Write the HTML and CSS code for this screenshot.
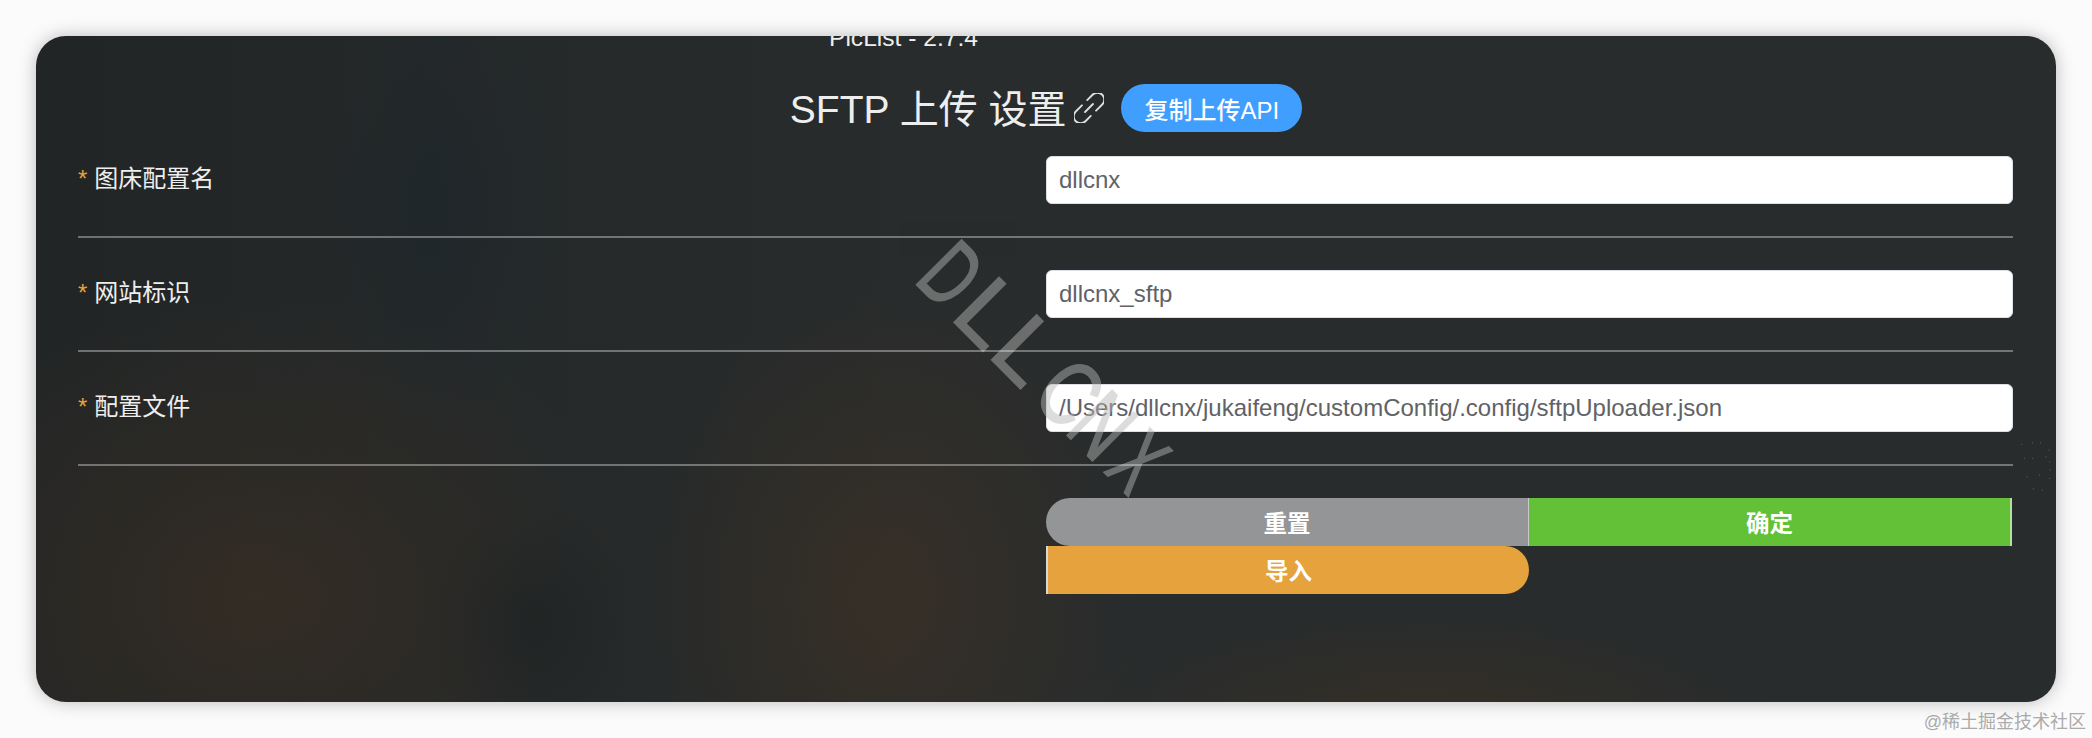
FILE: index.html
```html
<!DOCTYPE html>
<html lang="zh-CN">
<head>
  <meta charset="UTF-8">
  <meta name="viewport" content="width=device-width, initial-scale=1.0">
  <title>SFTP 上传 设置</title>
  <link rel="stylesheet" href="styles.css">
</head>
<body>
  <div class="window">
    <div class="app-title">PicList - 2.7.4</div>

    <div class="page-title">
      <span class="page-title-text">SFTP 上传 设置</span>
      <svg class="link-icon" viewBox="3 3 24 24" fill="none" stroke="#dedede" stroke-width="1.5" stroke-linecap="round">
        <g transform="rotate(-45 15 15)">
          <path d="M12.5 9.5H5.5a5.5 5.5 0 0 0 0 11H11.5"/>
          <path d="M17.5 20.5H24.5a5.5 5.5 0 0 0 0-11H18.5"/>
          <path d="M10.5 15H19.5"/>
        </g>
      </svg>
      <button class="copy-button">复制上传API</button>
    </div>

    <form class="config-form">
      <div class="form-row">
        <label class="form-label"><span class="required">*</span>图床配置名</label>
        <input class="form-input" type="text" value="dllcnx">
      </div>
      <div class="form-divider"></div>

      <div class="form-row">
        <label class="form-label"><span class="required">*</span>网站标识</label>
        <input class="form-input" type="text" value="dllcnx_sftp">
      </div>
      <div class="form-divider"></div>

      <div class="form-row">
        <label class="form-label"><span class="required">*</span>配置文件</label>
        <input class="form-input" type="text" value="/Users/dllcnx/jukaifeng/customConfig/.config/sftpUploader.json">
      </div>
      <div class="form-divider"></div>

      <div class="form-actions">
        <button type="button" class="action-button reset-button">重置</button>
        <button type="button" class="action-button confirm-button">确定</button>
        <button type="button" class="action-button import-button">导入</button>
      </div>
    </form>

    <!-- watermark lies over the form, cut off where the buttons start -->
    <div class="watermark-clip">
      <div class="watermark"><span class="wm-letter wm-d">D</span><span class="wm-letter wm-l1">L</span><span class="wm-letter wm-l2">L</span><span class="wm-letter wm-c">C</span><span class="wm-letter wm-n">N</span><span class="wm-letter wm-x">X</span></div>
    </div>

    <svg class="dots" viewBox="0 0 40 56" fill="#6d7476">
      <circle cx="1.7" cy="4.3" r=".5"/>
      <circle cx="12.7" cy="2.7" r=".5"/>
      <circle cx="20.7" cy="2.7" r=".5"/>
      <circle cx="29" cy="10" r=".5"/>
      <circle cx="4.3" cy="18.3" r=".5"/>
      <circle cx="12.7" cy="18.3" r=".5"/>
      <circle cx="26" cy="16.7" r=".5"/>
      <circle cx="29.7" cy="21.7" r=".5"/>
      <circle cx="30" cy="30" r=".5"/>
      <circle cx="19.3" cy="35" r=".5"/>
      <circle cx="7" cy="36.7" r=".5"/>
      <circle cx="29.7" cy="38.3" r=".5"/>
      <circle cx="13.3" cy="48.7" r=".5"/>
      <circle cx="22.3" cy="50" r=".5"/>
    </svg>
  </div>

  <div class="site-mark">@稀土掘金技术社区</div>
</body>
</html>
```

FILE: styles.css
```css
html, body {
  height: 100%;
}

body {
  margin: 0;
  padding: 36px 36px 0;
  box-sizing: border-box;
  overflow: hidden;
  background-color: #fbfbfb;
  font-family: "Liberation Sans", "Noto Sans CJK SC", sans-serif;
}

.window {
  position: relative;
  height: 666px;
  overflow: hidden;
  border-radius: 30px;
  box-shadow: 0 0 18px rgba(0, 0, 0, 0.26);
  background-color: #282c2d;
  background-image:
    radial-gradient(ellipse 110px 130px at 500px 590px, rgba(32, 36, 36, 0.9), transparent),
    radial-gradient(ellipse 380px 300px at 220px 560px, rgba(62, 48, 34, 0.6), transparent),
    radial-gradient(ellipse 260px 330px at 850px 560px, rgba(62, 48, 34, 0.65), transparent),
    radial-gradient(ellipse 360px 110px at 1390px 680px, rgba(62, 48, 32, 0.55), transparent),
    radial-gradient(ellipse 120px 220px at 400px 170px, rgba(24, 38, 44, 0.4), transparent),
    linear-gradient(90deg, rgba(0, 0, 0, 0.16), transparent 45%);
}

.app-title {
  margin: -13px 0 0 793px;
  height: 30px;
  line-height: 30px;
  font-size: 24.6px;
  color: #eeeeee;
}

.page-title {
  display: flex;
  align-items: center;
  justify-content: center;
  height: 48px;
  margin-top: 31px;
  color: #eeeeee;
}

.page-title-text {
  padding-bottom: 5px;
  font-size: 39px;
  white-space: nowrap;
}

.link-icon {
  width: 30px;
  height: 30px;
  margin: 0 17px 0 8px;
}

.copy-button {
  height: 48px;
  padding: 0 23px;
  border: none;
  border-radius: 24px;
  background-color: #409eff;
  color: white;
  font-family: inherit;
  font-size: 24px;
  font-weight: 500;
  white-space: nowrap;
}

.config-form {
  margin: 24px 43px 0 42px;
}

.form-row {
  display: grid;
  grid-template-columns: 968px 1fr;
  padding-bottom: 32px;
}

.form-label {
  font-size: 24px;
  line-height: 46px;
  color: #eeeeee;
}

.required {
  margin-right: 7px;
  color: #e6a23c;
}

.form-input {
  height: 48px;
  box-sizing: border-box;
  padding: 0 12px;
  border: 1px solid #dcdfe6;
  border-radius: 6px;
  background-color: white;
  color: #606266;
  font-family: inherit;
  font-size: 24px;
  outline: none;
}

.form-divider {
  position: relative;
  z-index: 2;
  height: 2px;
  margin-bottom: 32px;
  background-color: rgba(255, 255, 255, 0.35);
}

.form-actions {
  display: flex;
  flex-wrap: wrap;
  width: 966px;
  margin-left: 968px;
}

.action-button {
  width: 50%;
  height: 48px;
  box-sizing: border-box;
  border: none;
  color: white;
  font-family: inherit;
  font-size: 23.5px;
  font-weight: 700;
}

.reset-button {
  border-right: 1px solid #c8c9cc;
  border-radius: 24px 0 0 24px;
  background-color: #939597;
}

.confirm-button {
  border-right: 2px solid #b3e19d;
  background-color: #62c136;
}

.import-button {
  border-left: 2px solid #d8d8d8;
  border-radius: 0 24px 24px 0;
  background-color: #e6a23c;
}

.watermark-clip {
  position: absolute;
  top: 0;
  left: 0;
  right: 0;
  height: 462px;
  overflow: hidden;
  pointer-events: none;
}

.watermark {
  position: absolute;
  left: 877px;
  top: 167px;
  line-height: 1;
  font-size: 92px;
  white-space: nowrap;
  color: #b7b7b7;
  -webkit-text-stroke: 2px #b7b7b7;
  opacity: 0.47;
  transform-origin: 0 78px;
  transform: rotate(45deg);
}

/* the letters are squeezed unevenly in the reference */
.wm-letter {
  display: inline-block;
  transform-origin: 0 50%;
}

.wm-d { width: 51px; transform: scaleX(0.67); }
.wm-l1 { width: 53px; }
.wm-l2 { width: 61px; }
.wm-c { width: 48px; transform: scaleX(0.75); }
.wm-n { width: 56px; transform: scaleX(0.7); }
.wm-x { width: 40px; transform: scaleX(0.6); }

.dots {
  position: absolute;
  left: 1984px;
  top: 404px;
  width: 40px;
  height: 56px;
}

.site-mark {
  margin: 10px -30px 0 0;
  text-align: right;
  font-size: 18px;
  line-height: 20px;
  color: #ababab;
}
```
